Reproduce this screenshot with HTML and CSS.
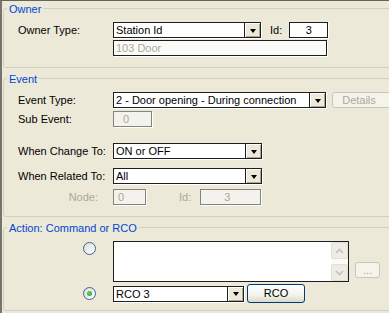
FILE: index.html
```html
<!DOCTYPE html>
<html lang="en">
<head>
    <meta charset="UTF-8">
    <title>Event Settings</title>
    <link rel="stylesheet" href="styles.css">
</head>
<body>

    <div class="dialog">

        <section class="group group-owner">
            <div class="legend">Owner</div>
            <div class="row">
                <span class="label">Owner Type:</span>
                <div class="combo combo-owner">
                    <span class="combo-text">Station Id</span>
                    <span class="combo-arrow"></span>
                </div>
                <span class="id-label">Id:</span>
                <div class="field field-id">3</div>
            </div>
            <div class="row row-tight">
                <div class="field field-door">103 Door</div>
            </div>
        </section>

        <section class="group group-event">
            <div class="legend">Event</div>
            <div class="row">
                <span class="label">Event Type:</span>
                <div class="combo combo-event">
                    <span class="combo-text">2 - Door opening - During connection</span>
                    <span class="combo-arrow"></span>
                </div>
                <div class="btn btn-details is-disabled">Details</div>
            </div>
            <div class="row row-sub">
                <span class="label">Sub Event:</span>
                <div class="field field-sub is-disabled">0</div>
            </div>
            <div class="row row-change">
                <span class="label">When Change To:</span>
                <div class="combo combo-change">
                    <span class="combo-text">ON or OFF</span>
                    <span class="combo-arrow"></span>
                </div>
            </div>
            <div class="row row-related">
                <span class="label">When Related To:</span>
                <div class="combo combo-change">
                    <span class="combo-text">All</span>
                    <span class="combo-arrow"></span>
                </div>
            </div>
            <div class="row row-node">
                <span class="label label-right is-muted">Node:</span>
                <div class="field field-node is-disabled">0</div>
                <span class="node-id-label is-muted">Id:</span>
                <div class="field field-node-id is-disabled">3</div>
            </div>
        </section>

        <section class="group group-action">
            <div class="legend">Action: Command or RCO</div>
            <div class="row row-action row-memo">
                <span class="radio"></span>
                <div class="memo">
                    <div class="scroll">
                        <span class="scroll-btn">
                            <svg width="9" height="6" viewBox="0 0 9 6"><path d="M1 5 L4.5 1.5 L8 5" fill="none" stroke="#c3c1b6" stroke-width="1.6"/></svg>
                        </span>
                        <span class="scroll-btn">
                            <svg width="9" height="6" viewBox="0 0 9 6"><path d="M1 1 L4.5 4.5 L8 1" fill="none" stroke="#c3c1b6" stroke-width="1.6"/></svg>
                        </span>
                    </div>
                </div>
                <div class="btn btn-dots is-disabled">...</div>
            </div>
            <div class="row row-action row-rco">
                <span class="radio is-checked"></span>
                <div class="combo combo-rco">
                    <span class="combo-text">RCO 3</span>
                    <span class="combo-arrow"></span>
                </div>
                <div class="btn btn-rco">RCO</div>
            </div>
        </section>

    </div>

</body>
</html>
```

FILE: styles.css
```css
html, body {
    margin: 0;
    height: 100%;
}

body {
    background-color: #ECE9D8;
    font-family: "Liberation Sans", Arial, sans-serif;
    font-size: 11px;
    color: #000;
    overflow: hidden;
    border-top: 1px solid #65645c;
    border-left: 2px solid #76756d;
    box-sizing: border-box;
}

.dialog {
    width: 420px;
}

/* group boxes */
.group {
    border: 1px solid #D0D0BF;
    border-radius: 3px;
    width: 400px;
    margin-left: 1px;
    padding: 0 0 11px 14px;
    box-sizing: border-box;
}

.group-owner {
    margin-top: 7px;
}

.group + .group {
    margin-top: 10px;
}

.group-action {
    padding-bottom: 7px;
}

.legend {
    width: fit-content;
    margin: -6px 0 0 -11px;
    padding: 0 2px;
    line-height: 13px;
    background-color: #ECE9D8;
    color: #0046D5;
}

/* rows */
.row {
    display: flex;
    align-items: center;
    height: 16px;
    margin-top: 6px;
}

.row-tight {
    margin-top: 2px;
    padding-left: 95px;
}

.row-sub {
    margin-top: 3px;
}

.row-change {
    margin-top: 16px;
}

.row-related {
    margin-top: 9px;
}

.row-node {
    margin-top: 5px;
}

.label {
    width: 95px;
    flex: none;
    white-space: nowrap;
}

.label-right {
    text-align: right;
    padding-right: 15px;
    box-sizing: border-box;
}

.is-muted {
    color: #ACA899;
}

.id-label {
    margin: 0 7px 0 9px;
}

.node-id-label {
    margin: 0 9px 0 33px;
}

/* combo boxes */
.combo {
    display: flex;
    height: 16px;
    border: 1px solid #1e1e1e;
    background-color: #fff;
    box-sizing: border-box;
    flex: none;
    box-shadow: 1px 1px 0 #fff;
}

.combo-text {
    flex: 1;
    padding-left: 2px;
    line-height: 14px;
    white-space: nowrap;
    overflow: hidden;
}

.combo-arrow {
    width: 15px;
    flex: none;
    display: flex;
    align-items: center;
    justify-content: center;
    border-left: 1px solid #1e1e1e;
    background-color: #ECE9D8;
    box-shadow: inset 1px 1px 0 #fff, inset -1px -1px 0 #aca899;
}

.combo-arrow::after {
    content: "";
    border-top: 4px solid #000;
    border-left: 3px solid transparent;
    border-right: 3px solid transparent;
    margin-top: 1px;
}

.combo-owner {
    width: 148px;
}

.combo-event {
    width: 213px;
}

.combo-change {
    width: 149px;
}

.combo-rco {
    width: 131px;
}

/* edit fields */
.field {
    height: 16px;
    border: 1px solid #1e1e1e;
    background-color: #fff;
    box-sizing: border-box;
    line-height: 14px;
    flex: none;
    box-shadow: 1px 1px 0 #fff;
}

.field.is-disabled {
    border-color: #85847c;
    background-color: #F3F2EC;
    color: #ACA899;
}

.field-id {
    width: 39px;
    text-align: center;
}

.field-door {
    width: 214px;
    padding-left: 2px;
    color: #ACA899;
    background-color: #fbfbf8;
}

.field-sub {
    width: 39px;
    padding-left: 9px;
}

.field-node {
    width: 33px;
    padding-left: 4px;
}

.field-node-id {
    width: 61px;
    padding-left: 23px;
}

/* buttons */
.btn {
    box-sizing: border-box;
    border-radius: 3px;
    text-align: center;
    flex: none;
}

.btn.is-disabled {
    border: 1px solid #C9C7BA;
    background-color: #F5F4EA;
    color: #ACA899;
}

.btn-details {
    width: 62px;
    height: 16px;
    line-height: 14px;
    margin-left: 6px;
    padding-right: 8px;
}

.btn-dots {
    width: 25px;
    height: 16px;
    line-height: 14px;
    margin-left: 6px;
    align-self: flex-end;
    margin-bottom: 4px;
}

.btn-rco {
    width: 58px;
    height: 19px;
    line-height: 17px;
    margin-left: 3px;
    border: 1px solid #003C74;
    background: linear-gradient(#ffffff, #f3f2ec 60%, #dcd8cc);
}

/* action rows */
.row-action {
    padding-left: 65px;
}

.row-memo {
    height: 41px;
    align-items: flex-start;
}

.row-rco {
    height: 19px;
    margin-top: 2px;
}

.radio {
    width: 13px;
    height: 13px;
    border-radius: 50%;
    border: 1px solid #3d6592;
    box-sizing: border-box;
    background: linear-gradient(135deg, #dcdcd7, #ffffff);
    margin-right: 17px;
    flex: none;
    display: flex;
    align-items: center;
    justify-content: center;
}

.row-memo .radio {
    margin-top: 1px;
}

.radio.is-checked::after {
    content: "";
    width: 5px;
    height: 5px;
    border-radius: 50%;
    background: radial-gradient(circle at 40% 40%, #5fd45f, #21A121);
}

.memo {
    width: 236px;
    height: 41px;
    border: 1px solid #1e1e1e;
    background-color: #fff;
    box-sizing: border-box;
    display: flex;
    justify-content: flex-end;
    flex: none;
}

.scroll {
    width: 17px;
    display: flex;
    flex-direction: column;
    justify-content: space-between;
    background-color: #fafaf7;
}

.scroll-btn {
    height: 17px;
    display: flex;
    align-items: center;
    justify-content: center;
    background-color: #EEEDE5;
    border: 1px solid #e2e0d5;
    box-sizing: border-box;
    border-radius: 2px;
}
```
